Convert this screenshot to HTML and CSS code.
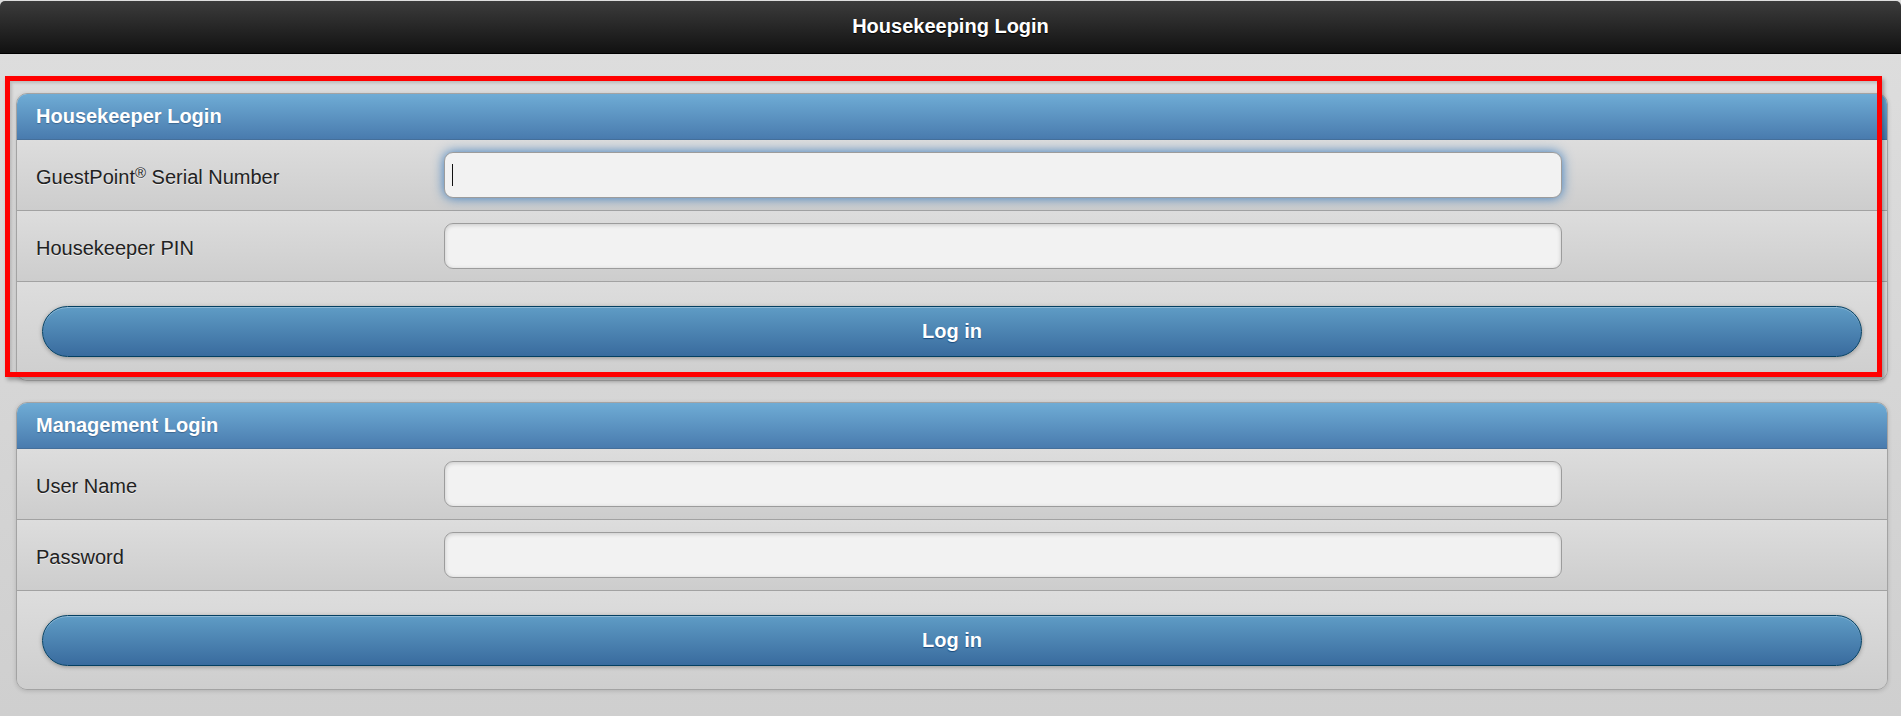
FILE: index.html
```html
<!DOCTYPE html>
<html lang="en">

<head>
    <meta charset="UTF-8">
    <meta name="viewport" content="width=device-width, initial-scale=1.0">
    <title>Housekeeping Login</title>
    <link rel="stylesheet" href="styles.css">
</head>

<body>
    <header class="page-header">
        <h1>Housekeeping Login</h1>
    </header>

    <main class="content">
        <!-- Housekeeper login -->
        <form class="login-box">
            <h2 class="login-title">Housekeeper Login</h2>
            <div class="field-row">
                <label for="serial">GuestPoint<sup>&reg;</sup> Serial Number</label>
                <span class="input-wrap is-focused"><input id="serial" type="text"></span>
            </div>
            <div class="field-row">
                <label for="pin">Housekeeper PIN</label>
                <span class="input-wrap"><input id="pin" type="password"></span>
            </div>
            <div class="button-row">
                <button type="button" class="login-btn">Log in</button>
            </div>
        </form>

        <!-- Management login -->
        <form class="login-box">
            <h2 class="login-title">Management Login</h2>
            <div class="field-row">
                <label for="user">User Name</label>
                <span class="input-wrap"><input id="user" type="text"></span>
            </div>
            <div class="field-row">
                <label for="pass">Password</label>
                <span class="input-wrap"><input id="pass" type="password"></span>
            </div>
            <div class="button-row">
                <button type="button" class="login-btn">Log in</button>
            </div>
        </form>
    </main>

    <!-- red highlight drawn over the first box -->
    <div class="highlight"></div>
</body>

</html>
```

FILE: styles.css
```css
/* Reset */
* {
    margin: 0;
    padding: 0;
    box-sizing: border-box;
}

body {
    font-family: "Liberation Sans", Arial, sans-serif;
    font-size: 20px;
    color: #222;
    background: linear-gradient(#dedede, #cfcfcf);
    min-height: 100vh;
    position: relative;
}

/* Top bar */
.page-header {
    margin-top: 1px;
    height: 53px;
    border-radius: 5px 5px 0 0;
    background: linear-gradient(#3c3c3c, #111);
    border-bottom: 1px solid #000;
    display: flex;
    align-items: center;
    justify-content: center;
}

.page-header h1 {
    font-size: 20px;
    font-weight: bold;
    color: #fff;
    text-shadow: 0 1px 1px #000;
    margin-top: -2px;
}

/* Page content */
.content {
    padding: 39px 13px 0 16px;
}

/* Login boxes */
.login-box {
    border: 1px solid #a3a3a3;
    border-radius: 11px;
    overflow: hidden;
    box-shadow: 0 1px 4px rgba(0, 0, 0, 0.15);
    margin-bottom: 21px;
}

.login-title {
    height: 46px;
    padding-left: 19px;
    display: flex;
    align-items: center;
    font-size: 20px;
    font-weight: bold;
    color: #fff;
    text-shadow: 0 1px 1px #3e6790;
    background: linear-gradient(#6facd5, #497bae);
    border-bottom: 1px solid #456f9a;
}

.field-row {
    height: 71px;
    display: flex;
    align-items: center;
    padding-left: 19px;
    background: linear-gradient(#dddddd, #cdcdcd);
    border-bottom: 1px solid #a2a2a2;
}

.field-row label {
    width: 408px;
    padding-top: 4px;
    text-shadow: 0 1px 0 #eee;
}

.field-row sup {
    font-size: 15px;
    vertical-align: 6px;
    line-height: 0;
}

.input-wrap {
    display: block;
    position: relative;
    width: 1118px;
    height: 46px;
}

.input-wrap input {
    width: 100%;
    height: 100%;
    border: 1px solid #9c9c9c;
    border-radius: 9px;
    background: #f2f2f2;
    box-shadow: inset 0 1px 4px rgba(0, 0, 0, 0.18);
    font: inherit;
    padding: 0 10px;
    outline: none;
}

.input-wrap.is-focused input {
    box-shadow: 0 0 12px #387bbe;
}

/* fake text cursor in the focused field */
.input-wrap.is-focused::after {
    content: "";
    position: absolute;
    left: 8px;
    top: 12px;
    width: 1px;
    height: 22px;
    background: #111;
}

.button-row {
    padding: 24px 25px 23px;
    background: linear-gradient(#dddddd, #cecece);
}

.login-btn {
    display: block;
    width: 100%;
    height: 51px;
    border: 1px solid #044062;
    border-radius: 26px;
    background: linear-gradient(#5f9cc5, #396b9e);
    box-shadow: 0 1px 4px rgba(0, 0, 0, 0.3), inset 0 1px 0 rgba(255, 255, 255, 0.3);
    color: #fff;
    font-family: inherit;
    font-size: 20px;
    font-weight: bold;
    text-shadow: 0 1px 1px #194b7e;
}

/* Red annotation frame */
.highlight {
    position: absolute;
    left: 5px;
    top: 76px;
    width: 1877px;
    height: 301px;
    border: 5px solid #f00;
    box-shadow: 2px 3px 4px rgba(0, 0, 0, 0.3), inset 2px 2px 3px rgba(0, 0, 0, 0.15);
    pointer-events: none;
}
```
